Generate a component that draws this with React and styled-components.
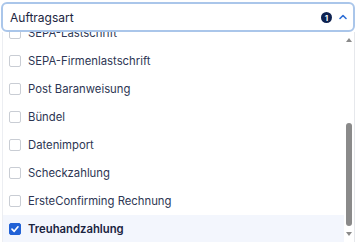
import React from 'react';
import styled, { createGlobalStyle } from 'styled-components';

const GlobalStyle = createGlobalStyle`
  html, body {
    margin: 0;
    padding: 0;
    background: #ffffff;
    font-family: 'Inter', 'Noto Sans', sans-serif;
  }
`;

const options = [
  { id: 1, label: 'SEPA-Lastschrift' },
  { id: 2, label: 'SEPA-Firmenlastschrift' },
  { id: 3, label: 'Post Baranweisung' },
  { id: 4, label: 'Bündel' },
  { id: 5, label: 'Datenimport' },
  { id: 6, label: 'Scheckzahlung' },
  { id: 7, label: 'ErsteConfirming Rechnung' },
  { id: 8, label: 'Treuhandzahlung', checked: true },
];

export default function App() {
  return (
    <>
      <GlobalStyle />
      <Wrapper>
        <Select>
          <Placeholder>Auftragsart</Placeholder>
          <Badge>1</Badge>
          <svg width="8" height="6" viewBox="0 0 8 6">
            <polyline points="1,4.5 4,1.5 7,4.5" fill="none" stroke="#2f6fd6" strokeWidth="1.6" strokeLinecap="round" strokeLinejoin="round" />
          </svg>
        </Select>
        <Panel>
          <List>
            <Inner>
              {options.map((o) => (
                <Row key={o.id} selected={o.checked}>
                  <Box checked={o.checked}>
                    {o.checked && (
                      <svg width="10" height="10" viewBox="0 0 10 10">
                        <polyline points="2,5.2 4.2,7.3 8,2.8" fill="none" stroke="#ffffff" strokeWidth="1.7" strokeLinecap="round" strokeLinejoin="round" />
                      </svg>
                    )}
                  </Box>
                  <Label selected={o.checked}>{o.label}</Label>
                </Row>
              ))}
            </Inner>
          </List>
          <ScrollBar>
            <Arrow />
            <Track>
              <Thumb />
            </Track>
            <Arrow down />
          </ScrollBar>
        </Panel>
      </Wrapper>
    </>
  );
}

const Wrapper = styled.div`
  width: 354px;
  margin-left: 1px;
  padding-top: 2px;
  height: 240px;
  display: flex;
  flex-direction: column;
  overflow: hidden;
`;

const Select = styled.div`
  position: relative;
  z-index: 2;
  height: 26px;
  flex-shrink: 0;
  display: flex;
  align-items: center;
  gap: 7px;
  padding: 0 6px 0 7px;
  background: #ffffff;
  border: 2px solid #aac6ea;
  border-radius: 6px;
`;

const Placeholder = styled.span`
  flex: 1;
  font-size: 12px;
  color: #1c2541;
`;

const Badge = styled.span`
  width: 11px;
  height: 11px;
  border-radius: 50%;
  background: #0e2251;
  color: #ffffff;
  font-size: 8px;
  font-weight: 700;
  display: flex;
  align-items: center;
  justify-content: center;
  margin-top: 1px;
`;

const Panel = styled.div`
  flex: 1;
  display: flex;
  margin: 0 0 0 1px;
  border-left: 1px solid #eceef2;
  border-right: 1px solid #e6e8ec;
  background: #ffffff;
  min-height: 0;
`;

const List = styled.div`
  flex: 1;
  overflow: hidden;
`;

const Inner = styled.div`
  margin-top: -13px;
`;

const Row = styled.div`
  height: 28px;
  display: flex;
  align-items: center;
  gap: 7px;
  padding-left: 6px;
  background: ${(p) => (p.selected ? '#f3f6fd' : 'transparent')};
`;

const Box = styled.span`
  width: 12px;
  height: 12px;
  box-sizing: border-box;
  border-radius: 2px;
  border: 1px solid ${(p) => (p.checked ? '#2262d6' : '#c9cdd4')};
  background: ${(p) => (p.checked ? '#2262d6' : '#ffffff')};
  display: flex;
  align-items: center;
  justify-content: center;
`;

const Label = styled.span`
  font-size: 11.3px;
  color: ${(p) => (p.selected ? '#1a2340' : '#2d3653')};
  font-weight: ${(p) => (p.selected ? 600 : 400)};
`;

const ScrollBar = styled.div`
  width: 10px;
  display: flex;
  flex-direction: column;
  align-items: center;
  padding: 6px 0;
  box-sizing: border-box;
`;

const Arrow = styled.span`
  width: 0;
  height: 0;
  border-left: 3px solid transparent;
  border-right: 3px solid transparent;
  ${(p) => (p.down ? 'border-top: 4px solid #8a8a8a;' : 'border-bottom: 4px solid #8a8a8a;')}
  margin: ${(p) => (p.down ? '4px 0 0' : '0 0 1px')};
`;

const Track = styled.div`
  flex: 1;
  width: 100%;
  display: flex;
  justify-content: center;
`;

const Thumb = styled.div`
  width: 6px;
  height: 103px;
  margin-top: 80px;
  border-radius: 3px;
  background: #8a8a8a;
`;
